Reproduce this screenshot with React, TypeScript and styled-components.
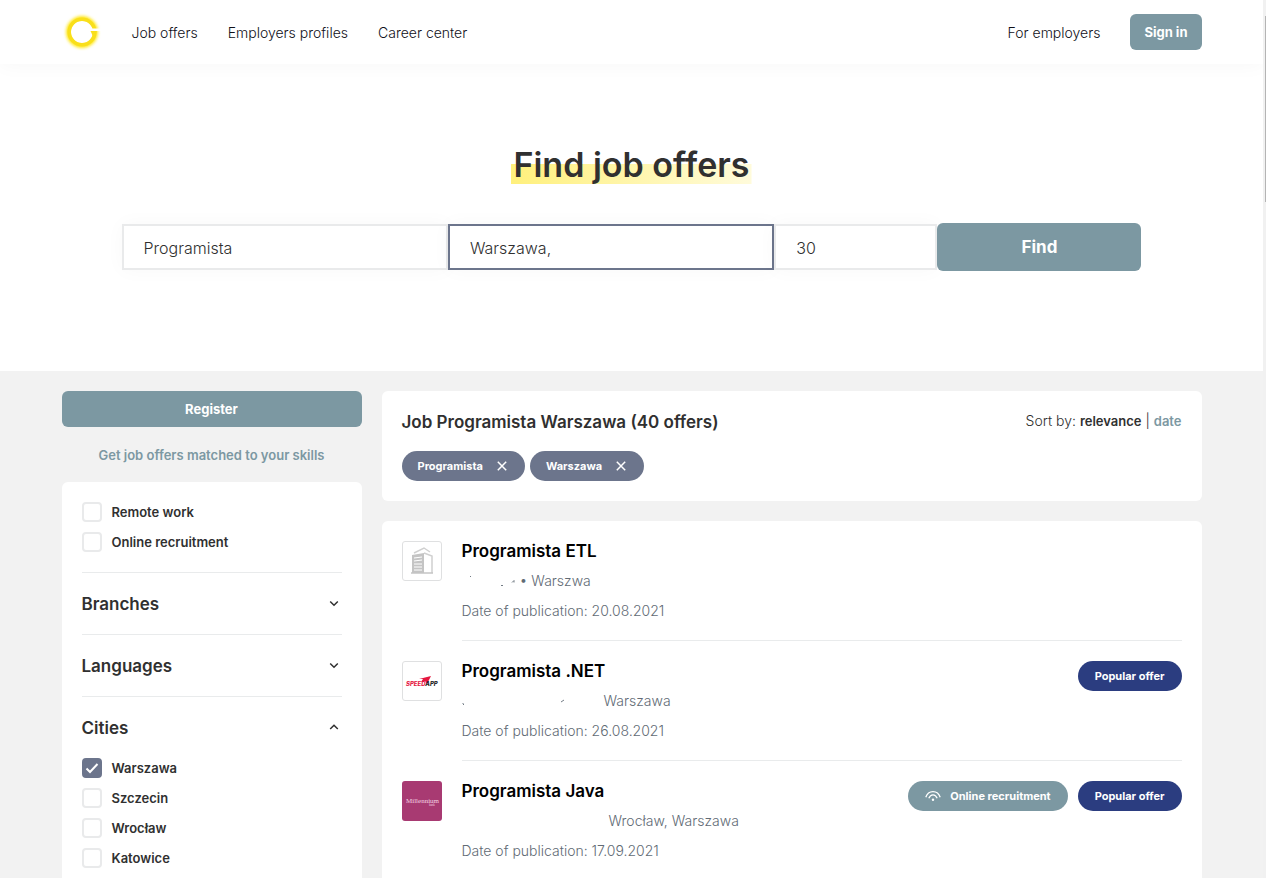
import React, { useState } from "react";
import styled, { createGlobalStyle } from "styled-components";

const GlobalStyle = createGlobalStyle`
  *, *::before, *::after { box-sizing: border-box; }
  body { margin: 0; background: #fff; }
  body, button, input { font-family: Inter, "Noto Sans", sans-serif; }
  h1, h2, h3, p, ul { margin: 0; padding: 0; }
  ul { list-style: none; }
  a { color: inherit; text-decoration: none; }
  button { border: 0; padding: 0; background: none; cursor: pointer; }
`;

const Shell = styled.div`
  display: flex;
  min-height: 100vh;
`;

const Page = styled.div`
  flex: 1;
  min-width: 0;
  display: flex;
  flex-direction: column;
  color: #303030;
`;

const ScrollTrack = styled.div`
  width: 3px;
  padding: 16px 0 0 2px;
  background: #f1f1f1;
`;

const ScrollThumb = styled.div`
  height: 186px;
  background: #b4b4b4;
`;

const Container = styled.div`
  width: 100%;
  max-width: 1140px;
  margin: 0 auto;
`;

const Header = styled.header`
  background: #fff;
  box-shadow: 0 0 20px rgba(0, 0, 0, 0.04);
`;

const HeaderRow = styled(Container)`
  display: flex;
  align-items: center;
  height: 64px;
  font-size: 14px;
  font-weight: 300;
`;

const LogoLink = styled.a`
  display: flex;
  width: 40px;
  height: 40px;
  margin-right: 30px;
`;

const Nav = styled.nav`
  display: flex;
  gap: 30px;
  flex: 1;
  color: #101018;
`;

const EmployersLink = styled.a`
  margin-right: 30px;
  color: #101018;
`;

const PrimaryButton = styled.button<{ $size?: "large" }>`
  height: ${(p) => (p.$size === "large" ? 48 : 36)}px;
  padding: 0 14px;
  border-radius: 6px;
  background: #7c98a2;
  color: #fff;
  font-size: ${(p) => (p.$size === "large" ? 17 : 13)}px;
  font-weight: 700;
`;

const Hero = styled.section`
  display: flex;
  flex-direction: column;
  align-items: center;
  padding: 80px 0 100px;
`;

const HeroTitle = styled.h1`
  margin-bottom: 39px;
  padding: 2px 2px 0;
  line-height: 38px;
  font-size: 34px;
  font-weight: 600;
  color: #303030;
  background: linear-gradient(90deg, #fff07c, #fffbdb) bottom / 100% 20px no-repeat;
`;

const SearchForm = styled.form`
  display: grid;
  grid-template-columns: 2fr 2fr 1fr 204px;
  align-items: center;
  width: 100%;
  max-width: 1020px;
`;

const SearchInput = styled.input<{ $active?: boolean }>`
  width: 100%;
  min-width: 0;
  height: 46px;
  padding: 2px 20px 0;
  border: 2px solid ${(p) => (p.$active ? "#6c758c" : "#e9eaeb")};
  border-radius: 0;
  outline: 0;
  background: #fff;
  box-shadow: 0 0 20px rgba(0, 0, 0, 0.03);
  color: #303030;
  font-size: 16px;
  font-weight: 300;
`;

const Results = styled.main`
  flex: 1;
  display: flex;
  padding-top: 20px;
  background: #f2f2f2;
`;

const Columns = styled(Container)`
  display: grid;
  grid-template-columns: 300px minmax(0, 1fr);
  gap: 20px;
`;

const Sidebar = styled.aside`
  display: flex;
  flex-direction: column;
`;

const SidebarNote = styled.p`
  padding: 18px 0 17px;
  line-height: 20px;
  text-align: center;
  font-size: 13px;
  font-weight: 600;
  color: #7c98a2;
`;

const FilterCard = styled.div`
  flex: 1;
  padding: 20px 20px 10px;
  border-radius: 6px 6px 0 0;
  background: #fff;
`;

const FilterSection = styled.section`
  border-top: 1px solid #e9ebec;
`;

const FilterToggle = styled.button`
  display: flex;
  align-items: center;
  justify-content: space-between;
  width: 100%;
  height: 61px;
  padding-right: 2px;
  color: #303030;
  font-size: 17px;
  font-weight: 600;
`;

const CheckList = styled.ul<{ $spaced?: boolean }>`
  display: grid;
  gap: 10px;
  padding-bottom: ${(p) => (p.$spaced ? 20 : 0)}px;
`;

const CheckLabel = styled.label`
  display: flex;
  align-items: center;
  gap: 10px;
  line-height: 20px;
  font-size: 13px;
  font-weight: 600;
`;

const CheckBox = styled.input`
  appearance: none;
  width: 20px;
  height: 20px;
  margin: 0;
  border: 2px solid #e9eaeb;
  border-radius: 4px;
  background: #fff;

  &:checked {
    border-color: #6c758c;
    background: #6c758c
      url("data:image/svg+xml,%3Csvg xmlns='http://www.w3.org/2000/svg' viewBox='0 0 16 16'%3E%3Cpath d='M2.5 8.5l3.5 3.5 7.500-8' fill='none' stroke='white' stroke-width='2'/%3E%3C/svg%3E")
      center / 16px no-repeat;
  }
`;

const MainColumn = styled.div`
  display: flex;
  flex-direction: column;
  gap: 20px;
`;

const Summary = styled.section`
  padding: 20px;
  border-radius: 6px;
  background: #fff;
`;

const SummaryTop = styled.div`
  display: flex;
  justify-content: space-between;
  margin-bottom: 18px;
  line-height: 22px;
`;

const SummaryTitle = styled.h2`
  font-size: 17px;
  font-weight: 600;
`;

const Sort = styled.p`
  line-height: 20px;
  font-size: 14px;
  font-weight: 300;
`;

const SortLink = styled.a<{ $active?: boolean }>`
  font-size: 13px;
  font-weight: 600;
  color: ${(p) => (p.$active ? "#303030" : "#7c98a2")};
`;

const ChipRow = styled.div`
  display: flex;
  gap: 5px;
`;

const Chip = styled.button`
  display: flex;
  align-items: center;
  gap: 14px;
  height: 30px;
  padding: 0 18px 0 16px;
  border-radius: 15px;
  background: #6c758c;
  color: #fff;
  font-size: 11px;
  font-weight: 700;
`;

const Offers = styled.section`
  flex: 1;
  border-radius: 6px 6px 0 0;
  background: #fff;
`;

const Offer = styled.article`
  display: flex;
  gap: 20px;
  padding: 20px 20px 0;

  &:last-child > div {
    border-bottom-color: transparent;
    padding-bottom: 0;
  }
`;

const OfferBody = styled.div`
  flex: 1;
  display: flex;
  justify-content: space-between;
  padding-bottom: 19px;
  border-bottom: 1px solid #e9ebec;
`;

const OfferText = styled.div`
  display: grid;
  gap: 10px;
  line-height: 20px;
  font-size: 14px;
  font-weight: 300;
  color: #626b75;
`;

const OfferTitle = styled.h3`
  font-size: 17px;
  font-weight: 600;
  color: #000;
`;

const Company = styled.p`
  display: flex;
`;

const Badges = styled.div`
  display: flex;
  align-items: flex-start;
  gap: 10px;
`;

const Badge = styled.span<{ $tone: "navy" | "teal" }>`
  display: flex;
  align-items: center;
  gap: 9px;
  height: 30px;
  padding: 0 17px;
  border-radius: 15px;
  background: ${(p) => (p.$tone === "navy" ? "#2b3d80" : "#7c98a2")};
  color: #fff;
  font-size: 11px;
  font-weight: 700;
`;

const LogoTile = styled.div<{ $filled?: boolean }>`
  display: flex;
  width: 40px;
  height: 40px;
  border: ${(p) => (p.$filled ? "0" : "1px solid #dfe0e1")};
  border-radius: 3px;
  background: ${(p) => (p.$filled ? "#a83a72" : "#fff")};
`;

const BrandLogo = () => (
  <svg width="40" height="40" viewBox="0 0 40 40" aria-hidden="true">
    <defs>
      <filter id="glow" x="-30%" y="-30%" width="160%" height="160%">
        <feGaussianBlur stdDeviation="1.400" />
      </filter>
    </defs>
    <circle cx="20" cy="20" r="13.500" fill="none" stroke="#ffe81e" strokeWidth="5" filter="url(#glow)" />
    <circle cx="20" cy="20" r="11" fill="#fff" />
    <circle cx="20" cy="20" r="12.800" fill="none" stroke="#f9df1a" strokeWidth="3.600" />
    <path d="M29 16.500h10v2.500h-10z" fill="#fff" />
    <path d="M28.500 19h6.200l-1.500 5h-2.400z" fill="#f9df1a" />
  </svg>
);

const Chevron = ({ up }: { up?: boolean }) => (
  <svg width="12" height="12" viewBox="0 0 12 12" aria-hidden="true">
    <path d={up ? "M2.200 7l3.800-3.800L9.800 7" : "M2.200 3.500L6 7.300l3.800-3.800"} fill="none" stroke="#303030" strokeWidth="1.500" />
  </svg>
);

const Cross = () => (
  <svg width="10" height="10" viewBox="0 0 10 10" aria-hidden="true">
    <path d="M.8.8l8.400 8.400M9.200.8L.8 9.200" stroke="#fff" strokeWidth="1.500" />
  </svg>
);

const Signal = () => (
  <svg width="16" height="12" viewBox="0 0 16 12" fill="none" stroke="#fff" strokeWidth="1.300" aria-hidden="true">
    <path d="M.8 7.200C3.300-.3 12.700-.3 15.200 7.200M3.800 8.300c2-4.600 6.400-4.600 8.400 0" />
    <circle cx="8" cy="9.800" r="1.200" fill="#fff" stroke="none" />
  </svg>
);

const BuildingLogo = () => (
  <svg width="38" height="38" viewBox="0 0 38 38" aria-hidden="true">
    <path d="M9 13l12-2v20H9z" fill="#c4c4c4" />
    <path d="M11 16l8-1M11 19l8-1M11 22h8M11 25h8M11 28h8" stroke="#fff" strokeWidth="1" />
    <path d="M11 11l10-5 6 4M21 11l8 3v17" fill="none" stroke="#d0d0d0" strokeWidth="1.500" />
    <path d="M8 31h22" stroke="#c4c4c4" strokeWidth="1.500" />
  </svg>
);

const SpeedLogo = () => (
  <svg width="38" height="38" viewBox="0 0 38 38" aria-hidden="true">
    <path d="M16 17l12-3-4 8-2-3-4 1 2-3z" fill="#e5173f" />
    <text x="3" y="24" fontFamily="Inter, sans-serif" fontSize="6" fontWeight="800" fontStyle="italic" fill="#e5173f">
      SPEED<tspan fill="#1b1b22">APP</tspan>
    </text>
  </svg>
);

const MillenniumLogo = () => (
  <svg width="40" height="40" viewBox="0 0 40 40" fontFamily="Liberation Serif, serif" fill="#f3d3e3" aria-hidden="true">
    <text x="4" y="22" fontSize="7">Millennium</text>
    <text x="27" y="25" fontSize="3">bank</text>
  </svg>
);

/* Leftover marks of an erased company name, reserving its width on the line. */
const ErasedName = ({ width, marks }: { width: number; marks: string }) => (
  <svg width={width} height="20" aria-hidden="true">
    <path d={marks} fill="none" stroke="#737c85" strokeWidth="1" />
  </svg>
);

type OfferData = {
  title: string;
  place: string;
  date: string;
  erased: number;
  marks: string;
  logo: React.ReactNode;
  filled?: boolean;
  online?: boolean;
  popular?: boolean;
};

const offers: OfferData[] = [
  { title: "Programista ETL", place: "• Warszwa", date: "20.08.2021", erased: 58, marks: "M8 5.500h1M39 14.500h2M50 11.500l2-2v2", logo: <BuildingLogo /> },
  { title: "Programista .NET", place: "Warszawa", date: "26.08.2021", erased: 142, marks: "M1 12v1l1 1M99 11l3-2", logo: <SpeedLogo />, popular: true },
  { title: "Programista Java", place: "Wrocław, Warszawa", date: "17.09.2021", erased: 147, marks: "", logo: <MillenniumLogo />, filled: true, online: true, popular: true },
];

const CheckItem = ({ label, initial = false }: { label: string; initial?: boolean }) => {
  const [on, setOn] = useState(initial);
  return (
    <li>
      <CheckLabel>
        <CheckBox type="checkbox" checked={on} onChange={() => setOn(!on)} />
        {label}
      </CheckLabel>
    </li>
  );
};

export default function App() {
  return (
    <Shell>
      <GlobalStyle />
      <Page>
        <Header>
          <HeaderRow>
            <LogoLink href="#" aria-label="Home"><BrandLogo /></LogoLink>
            <Nav>
              <a href="#offers">Job offers</a>
              <a href="#profiles">Employers profiles</a>
              <a href="#career">Career center</a>
            </Nav>
            <EmployersLink href="#employers">For employers</EmployersLink>
            <PrimaryButton type="button">Sign in</PrimaryButton>
          </HeaderRow>
        </Header>

        <Hero>
          <HeroTitle>Find job offers</HeroTitle>
          <SearchForm onSubmit={(e) => e.preventDefault()}>
            <SearchInput aria-label="Position" defaultValue="Programista" />
            <SearchInput aria-label="City" defaultValue="Warszawa," $active />
            <SearchInput aria-label="Distance" defaultValue="30" />
            <PrimaryButton type="submit" $size="large">Find</PrimaryButton>
          </SearchForm>
        </Hero>

        <Results>
          <Columns>
            <Sidebar>
              <PrimaryButton type="button">Register</PrimaryButton>
              <SidebarNote>Get job offers matched to your skills</SidebarNote>
              <FilterCard>
                <CheckList $spaced>
                  <CheckItem label="Remote work" />
                  <CheckItem label="Online recruitment" />
                </CheckList>
                <FilterSection>
                  <FilterToggle type="button" aria-expanded="false">Branches<Chevron /></FilterToggle>
                </FilterSection>
                <FilterSection>
                  <FilterToggle type="button" aria-expanded="false">Languages<Chevron /></FilterToggle>
                </FilterSection>
                <FilterSection>
                  <FilterToggle type="button" aria-expanded="true">Cities<Chevron up /></FilterToggle>
                  <CheckList>
                    <CheckItem label="Warszawa" initial />
                    <CheckItem label="Szczecin" />
                    <CheckItem label="Wrocław" />
                    <CheckItem label="Katowice" />
                  </CheckList>
                </FilterSection>
              </FilterCard>
            </Sidebar>

            <MainColumn>
              <Summary>
                <SummaryTop>
                  <SummaryTitle>Job Programista Warszawa (40 offers)</SummaryTitle>
                  <Sort>
                    Sort by: <SortLink href="#relevance" $active>relevance</SortLink> | <SortLink href="#date">date</SortLink>
                  </Sort>
                </SummaryTop>
                <ChipRow>
                  <Chip type="button">Programista<Cross /></Chip>
                  <Chip type="button">Warszawa<Cross /></Chip>
                </ChipRow>
              </Summary>

              <Offers>
                {offers.map((o) => (
                  <Offer key={o.title}>
                    <LogoTile $filled={o.filled}>{o.logo}</LogoTile>
                    <OfferBody>
                      <OfferText>
                        <OfferTitle>{o.title}</OfferTitle>
                        <Company><ErasedName width={o.erased} marks={o.marks} />{o.place}</Company>
                        <p>Date of publication: {o.date}</p>
                      </OfferText>
                      <Badges>
                        {o.online && <Badge $tone="teal"><Signal />Online recruitment</Badge>}
                        {o.popular && <Badge $tone="navy">Popular offer</Badge>}
                      </Badges>
                    </OfferBody>
                  </Offer>
                ))}
              </Offers>
            </MainColumn>
          </Columns>
        </Results>
      </Page>
      <ScrollTrack>
        <ScrollThumb />
      </ScrollTrack>
    </Shell>
  );
}
